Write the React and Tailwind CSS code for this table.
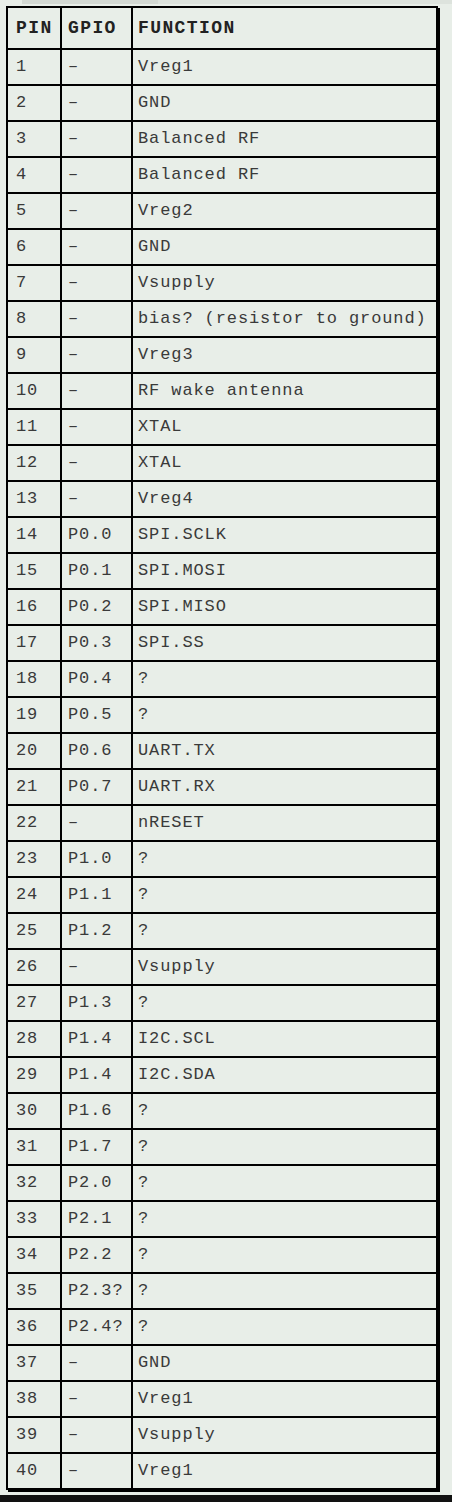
import React from "react";

const pins = [
  ["1", "–", "Vreg1"],
  ["2", "–", "GND"],
  ["3", "–", "Balanced RF"],
  ["4", "–", "Balanced RF"],
  ["5", "–", "Vreg2"],
  ["6", "–", "GND"],
  ["7", "–", "Vsupply"],
  ["8", "–", "bias? (resistor to ground)"],
  ["9", "–", "Vreg3"],
  ["10", "–", "RF wake antenna"],
  ["11", "–", "XTAL"],
  ["12", "–", "XTAL"],
  ["13", "–", "Vreg4"],
  ["14", "P0.0", "SPI.SCLK"],
  ["15", "P0.1", "SPI.MOSI"],
  ["16", "P0.2", "SPI.MISO"],
  ["17", "P0.3", "SPI.SS"],
  ["18", "P0.4", "?"],
  ["19", "P0.5", "?"],
  ["20", "P0.6", "UART.TX"],
  ["21", "P0.7", "UART.RX"],
  ["22", "–", "nRESET"],
  ["23", "P1.0", "?"],
  ["24", "P1.1", "?"],
  ["25", "P1.2", "?"],
  ["26", "–", "Vsupply"],
  ["27", "P1.3", "?"],
  ["28", "P1.4", "I2C.SCL"],
  ["29", "P1.4", "I2C.SDA"],
  ["30", "P1.6", "?"],
  ["31", "P1.7", "?"],
  ["32", "P2.0", "?"],
  ["33", "P2.1", "?"],
  ["34", "P2.2", "?"],
  ["35", "P2.3?", "?"],
  ["36", "P2.4?", "?"],
  ["37", "–", "GND"],
  ["38", "–", "Vreg1"],
  ["39", "–", "Vsupply"],
  ["40", "–", "Vreg1"],
];

export default function App() {
  return (
    <div className="w-[452px] h-[1502px] overflow-hidden bg-[#e8eee8] flex flex-col font-['Liberation_Mono','Courier_New',monospace]">
      {/* leftover scrollbar strip */}
      <div className="flex h-[4px]">
        <div className="w-[22px]" />
        <div className="w-[136px] bg-[#d3d9d3]" />
        <div className="flex-1 bg-[#dde3dd]" />
      </div>

      <table className="ml-[6px] mt-[2px] w-[432px] table-fixed border-separate border-spacing-0 border-l-2 border-t-2 border-black shadow-[2px_2px_0_#000] text-[17px] tracking-[0.9px] text-[#3a3a3a]">
        <thead className="text-[18px] tracking-[1.4px]">
          <tr>
            <th className="w-[54px] h-[42px] border-r-2 border-b-2 border-black pl-[8px] text-left font-bold text-[#222]">PIN</th>
            <th className="w-[71px] h-[42px] border-r-2 border-b-2 border-black pl-[6px] text-left font-bold text-[#222]">GPIO</th>
            <th className="h-[42px] border-r-2 border-b-2 border-black pl-[5px] text-left font-bold text-[#222]">FUNCTION</th>
          </tr>
        </thead>
        <tbody>
          {pins.map(([pin, gpio, fn]) => (
            <tr key={pin}>
              <td className="h-[36px] border-r-2 border-b-2 border-black pl-[8px] whitespace-nowrap">{pin}</td>
              <td className="h-[36px] border-r-2 border-b-2 border-black pl-[6px] whitespace-nowrap">{gpio}</td>
              <td className="h-[36px] border-r-2 border-b-2 border-black pl-[5px] whitespace-nowrap">{fn}</td>
            </tr>
          ))}
        </tbody>
      </table>

      <div className="mt-auto h-[7px] bg-[#121212]" />
    </div>
  );
}
